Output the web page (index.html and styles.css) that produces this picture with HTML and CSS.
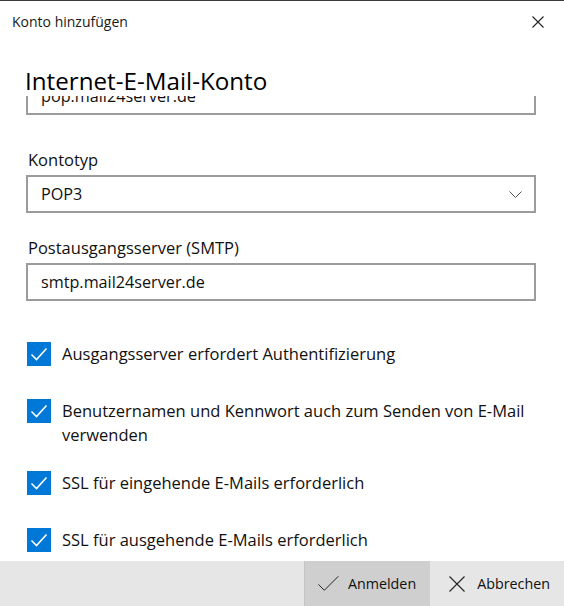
FILE: index.html
```html
<!DOCTYPE html>
<html lang="de">
<head>
	<meta charset="UTF-8">
	<title>Konto hinzufügen</title>
	<link rel="stylesheet" href="styles.css">
</head>
<body>
	<div class="dialog">
		<div class="titlebar">
			<span class="title">Konto hinzufügen</span>
			<a href="javascript:;" class="close">
				<svg width="12" height="12" viewBox="0 0 12 12"><path d="M0.5 0.5 L11.5 11.5 M11.5 0.5 L0.5 11.5" stroke="#222" stroke-width="1.1" fill="none"/></svg>
			</a>
		</div>

		<div class="heading">Internet-E-Mail-Konto</div>

		<div class="content">
			<div class="field first">
				<div class="box">pop.mail24server.de</div>
			</div>

			<div class="field">
				<div class="label">Kontotyp</div>
				<div class="box select">
					<span>POP3</span>
					<svg width="13" height="7" viewBox="0 0 13 7"><path d="M0.5 0.5 L6.5 6.5 L12.5 0.5" stroke="#555" stroke-width="1" fill="none"/></svg>
				</div>
			</div>

			<div class="field">
				<div class="label">Postausgangsserver (SMTP)</div>
				<div class="box">smtp.mail24server.de</div>
			</div>

			<div class="checks">
				<label class="check">
					<span class="tick"><svg width="24" height="24" viewBox="0 0 24 24"><path d="M4.5 12.5 L9.5 17.5 L19.5 6.5" stroke="#fff" stroke-width="1.6" fill="none"/></svg></span>
					<span class="text">Ausgangsserver erfordert Authentifizierung</span>
				</label>
				<label class="check">
					<span class="tick"><svg width="24" height="24" viewBox="0 0 24 24"><path d="M4.5 12.5 L9.5 17.5 L19.5 6.5" stroke="#fff" stroke-width="1.6" fill="none"/></svg></span>
					<span class="text">Benutzernamen und Kennwort auch zum Senden von E-Mail verwenden</span>
				</label>
				<label class="check">
					<span class="tick"><svg width="24" height="24" viewBox="0 0 24 24"><path d="M4.5 12.5 L9.5 17.5 L19.5 6.5" stroke="#fff" stroke-width="1.6" fill="none"/></svg></span>
					<span class="text">SSL für eingehende E-Mails erforderlich</span>
				</label>
				<label class="check">
					<span class="tick"><svg width="24" height="24" viewBox="0 0 24 24"><path d="M4.5 12.5 L9.5 17.5 L19.5 6.5" stroke="#fff" stroke-width="1.6" fill="none"/></svg></span>
					<span class="text">SSL für ausgehende E-Mails erforderlich</span>
				</label>
			</div>
		</div>

		<div class="footer">
			<a href="javascript:;" class="btn primary">
				<svg width="23" height="17" viewBox="0 0 23 17"><path d="M0.5 9.5 L7 16 L22.5 0.5" stroke="#222" stroke-width="1.1" fill="none"/></svg>
				<span>Anmelden</span>
			</a>
			<a href="javascript:;" class="btn">
				<svg width="16" height="16" viewBox="0 0 16 16"><path d="M0.5 0.5 L15.5 15.5 M15.5 0.5 L0.5 15.5" stroke="#222" stroke-width="1.1" fill="none"/></svg>
				<span>Abbrechen</span>
			</a>
		</div>
	</div>
</body>
</html>
```

FILE: styles.css
```css
html, body {
	margin: 0;
	padding: 0;
	background: #fff;
}
body {
	font-family: "Open Sans", "Noto Sans", sans-serif;
	color: #111;
}
.dialog {
	display: flex;
	flex-direction: column;
	width: 564px;
	height: 606px;
	box-sizing: border-box;
	border-top: 1px solid #3a3a3a;
	overflow: hidden;
}
.titlebar {
	display: flex;
	align-items: center;
	justify-content: space-between;
	height: 40px;
	padding: 0 20px 0 12px;
}
.title {
	font-size: 14px;
	color: #1a1a1a;
}
.close {
	display: flex;
	padding-top: 1px;
}
.heading {
	height: 55px;
	box-sizing: border-box;
	padding: 25px 0 0 25px;
	font-size: 24.2px;
	line-height: 30px;
	color: #000;
}
.content {
	flex: 1;
	overflow: hidden;
	padding: 0 28px 0 26px;
}
.field {
	margin-bottom: 23px;
}
.field.first {
	margin-top: -19px;
	margin-bottom: 33px;
}
.label {
	font-size: 16.5px;
	line-height: 24px;
	margin-bottom: 3px;
	padding-left: 2px;
}
.box {
	display: flex;
	align-items: center;
	justify-content: space-between;
	height: 38px;
	box-sizing: border-box;
	border: 2px solid #9c9c9c;
	padding: 0 12px 0 13px;
	font-size: 16.2px;
}
.checks {
	margin-top: 41px;
}
.check {
	display: flex;
	align-items: flex-start;
	min-height: 33px;
	margin-bottom: 24px;
	padding-left: 1px;
}
.tick {
	flex: none;
	display: flex;
	width: 24px;
	height: 24px;
	background: #0078d7;
	margin-right: 11px;
}
.check .text {
	font-size: 16.5px;
	line-height: 24px;
}
.footer {
	display: flex;
	justify-content: flex-end;
	height: 45px;
	background: #e6e6e6;
	flex: none;
}
.btn {
	display: flex;
	align-items: center;
	gap: 12px;
	padding: 0 14px 0 19px;
	color: #111;
	text-decoration: none;
	font-size: 14.3px;
}
.btn.primary {
	width: 126px;
	box-sizing: border-box;
	padding-left: 13px;
	gap: 9px;
	background: #cfcfcf;
	border-left: 1px solid #c4c4c4;
}
```
